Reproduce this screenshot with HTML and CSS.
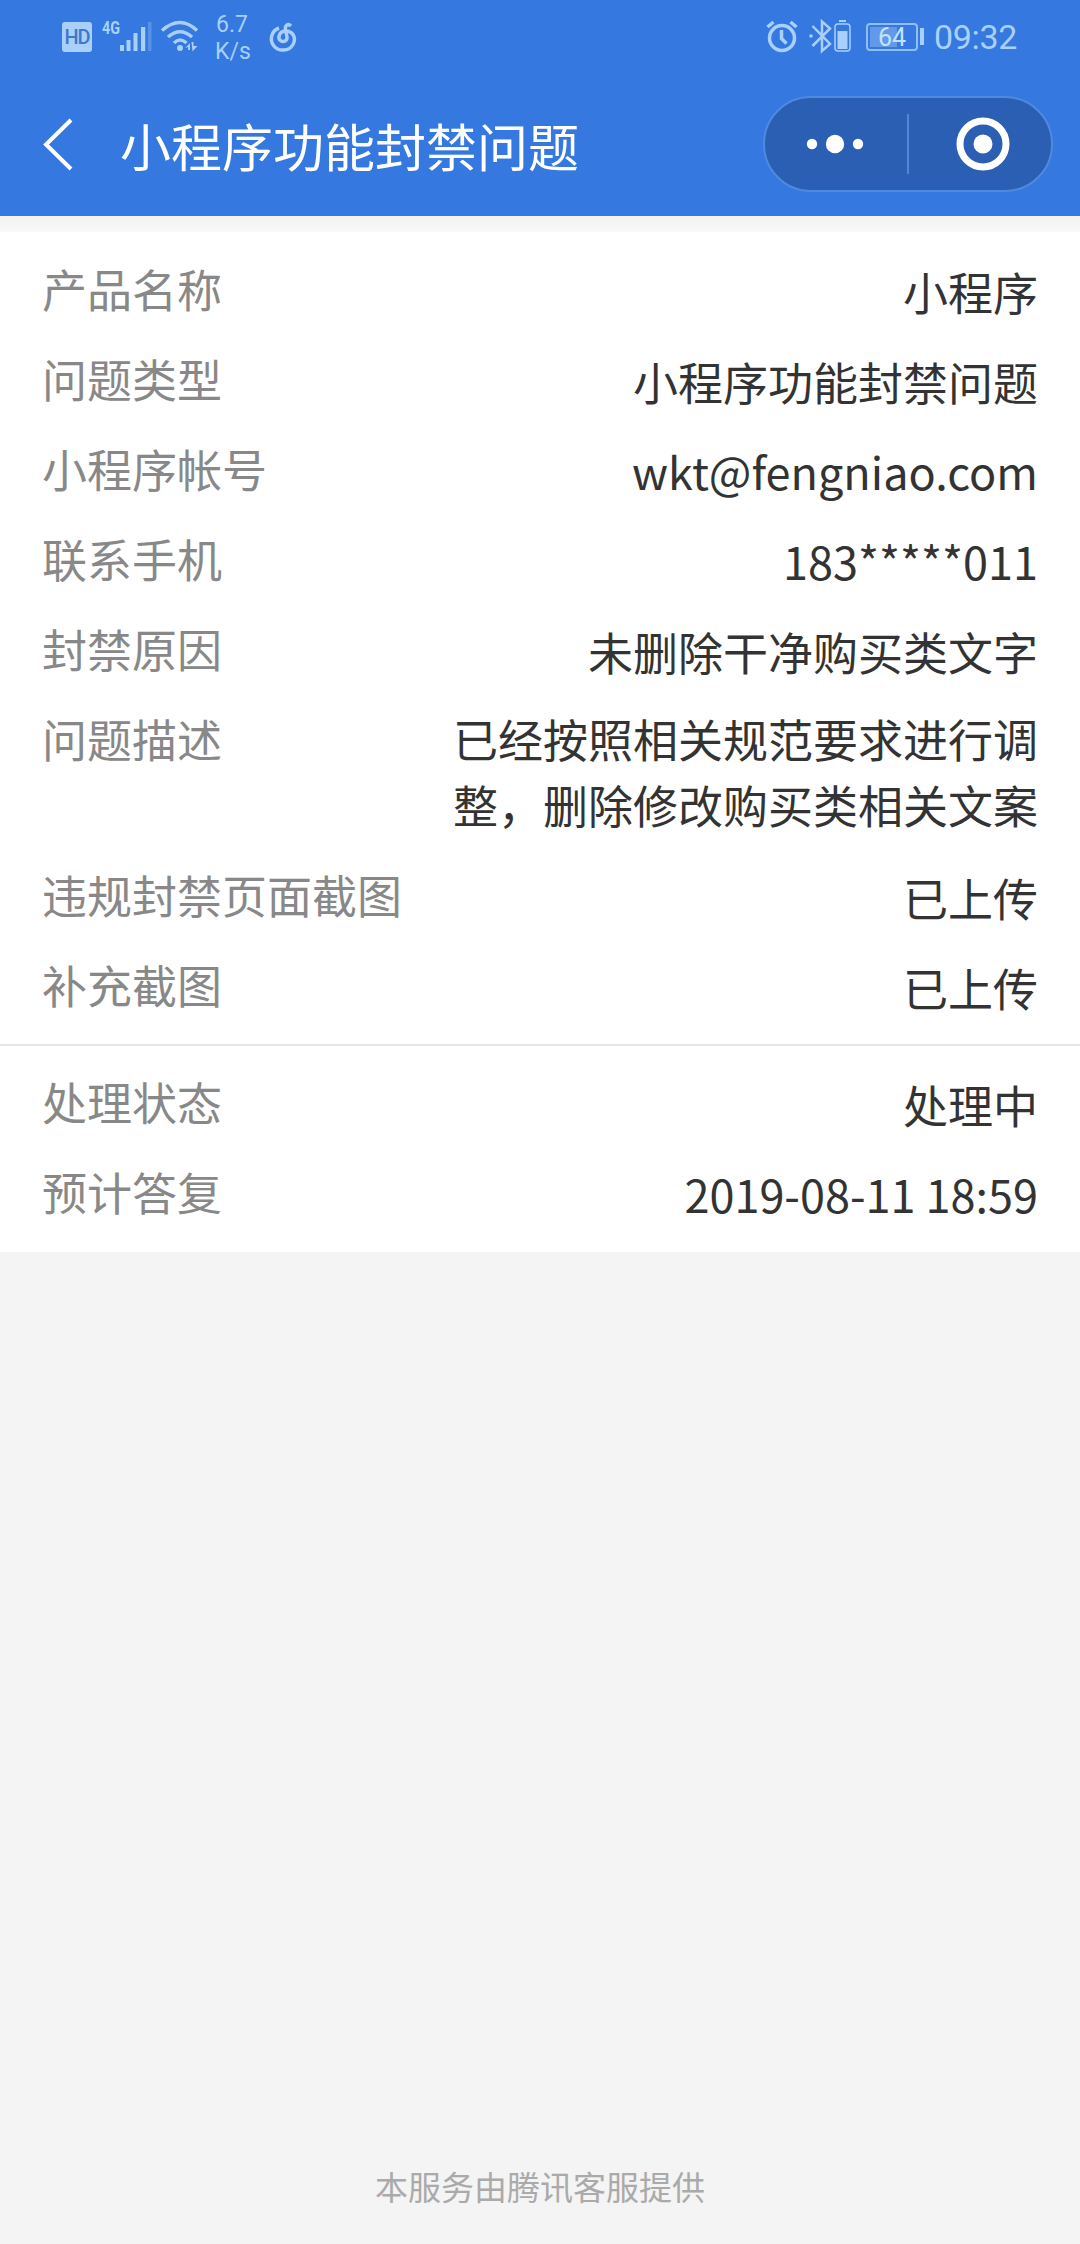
FILE: index.html
```
<!DOCTYPE html>
<html lang="zh-CN">
<head>
  <meta charset="UTF-8" />
  <meta name="viewport" content="width=device-width, initial-scale=1.0"/>
  <title>小程序功能封禁问题</title>
  <link rel="stylesheet" href="styles.css">
</head>
<body>
  <header class="header">
    <div class="status-bar">
      <div class="status-left">
        <span class="hd">HD</span>
        <!-- 信号 -->
        <svg class="icon" width="51" height="72" viewBox="101 0 51 72">
          <text class="net" x="102" y="34" textLength="18" lengthAdjust="spacingAndGlyphs">4G</text>
          <path d="M120 45h4v6h-4zM126.500 40h4v11h-4zM133.500 33h4v18h-4zM141 27h4.200v24H141z"/>
          <path opacity=".3" d="M148 22h3.500v29H148z"/>
        </svg>
        <!-- wifi -->
        <svg class="icon wifi" width="40" height="72" viewBox="160 0 40 72">
          <g class="line">
            <path d="M162 30.500Q180 14.500 197 30.500"/>
            <path d="M168 37Q180 26.500 192 37"/>
            <path d="M174 43Q180 37 186.500 43"/>
          </g>
          <circle cx="180" cy="48" r="3"/>
          <path d="M185 48l5-5v7h-2v-3zM191.500 42h2v4h4l-5 5.500z"/>
        </svg>
        <div class="speed">6.7<br>K/s</div>
        <!-- 音乐 -->
        <svg class="icon music" width="30" height="72" viewBox="268 0 30 72">
          <path class="line" d="M279 28C271 31 269.500 40 273.500 45.500C278.500 52 289 51.500 293 44.500C297 37 292 30.500 285 31C279 31.500 277.500 38 280.500 40.500C283.500 43 287.500 40.500 287 37L285.500 30C284.500 25.500 288 23 291 26"/>
        </svg>
      </div>
      <div class="status-right">
        <!-- 闹钟 -->
        <svg class="icon" width="34" height="72" viewBox="767 0 34 72">
          <g class="line">
            <circle cx="784" cy="38" r="12.500"/>
            <path d="M783.500 30v8.500l5 5"/>
            <path d="M769.500 27l6-5M798.500 27l-6-5"/>
          </g>
        </svg>
        <!-- 蓝牙 -->
        <svg class="icon bluetooth" width="44" height="72" viewBox="810 0 44 72">
          <path class="line thin" d="M813.500 26l17.500 18-8 7V21.500l8 7L813.500 46"/>
          <circle cx="812" cy="36" r="1.800"/>
          <rect class="line hair" x="836" y="24" width="15" height="27" rx="3"/>
          <path d="M840 20h7v2h-7zM838.500 31h10v18h-10z"/>
        </svg>
        <div class="battery"><span>64</span></div>
        <div class="battery-cap"></div>
        <span class="time">09:32</span>
      </div>
    </div>
    <div class="nav">
      <svg class="back" width="34" height="56" viewBox="0 0 34 56">
        <path d="M31 4L6 28.500L31 53"/>
      </svg>
      <h1>小程序功能封禁问题</h1>
      <div class="capsule">
        <svg width="50" height="20" viewBox="0 0 50 20">
          <circle cx="6" cy="10" r="5.200"/>
          <circle cx="29" cy="10" r="9.200"/>
          <circle cx="52" cy="10" r="5.200"/>
        </svg>
        <div class="capsule-line"></div>
        <svg width="54" height="54" viewBox="0 0 54 54">
          <circle class="ring" cx="27" cy="27" r="23"/>
          <circle cx="27" cy="27" r="9.500"/>
        </svg>
      </div>
    </div>
  </header>

  <main class="detail">
    <div class="section">
      <div class="row"><span class="label">产品名称</span><span class="value">小程序</span></div>
      <div class="row"><span class="label">问题类型</span><span class="value">小程序功能封禁问题</span></div>
      <div class="row"><span class="label">小程序帐号</span><span class="value latin">wkt@fengniao.com</span></div>
      <div class="row"><span class="label">联系手机</span><span class="value latin">183*****011</span></div>
      <div class="row"><span class="label">封禁原因</span><span class="value">未删除干净购买类文字</span></div>
      <div class="row row-long"><span class="label">问题描述</span><span class="value">已经按照相关规范要求进行调整，删除修改购买类相关文案</span></div>
      <div class="row"><span class="label">违规封禁页面截图</span><span class="value">已上传</span></div>
      <div class="row"><span class="label">补充截图</span><span class="value">已上传</span></div>
    </div>
    <div class="section section-status">
      <div class="row"><span class="label">处理状态</span><span class="value">处理中</span></div>
      <div class="row"><span class="label">预计答复</span><span class="value latin date">2019-08-11 18:59</span></div>
    </div>
  </main>

  <footer class="footer">本服务由腾讯客服提供</footer>
</body>
</html>
```
FILE: styles.css
```
* {
  box-sizing: border-box;
}
body {
  margin: 0;
  height: 2244px;
  display: flex;
  flex-direction: column;
  background-color: #f4f4f4;
  font-family: "Noto Sans CJK SC", sans-serif;
}
.header {
  height: 216px;
  background-color: #3478e0;
}

/* 状态栏 */
.status-bar {
  height: 72px;
  display: flex;
  justify-content: space-between;
  padding: 0 62px;
  color: #a9d0fa;
  font-family: Roboto, sans-serif;
}
.status-left,
.status-right {
  display: flex;
  align-items: center;
}
.icon {
  fill: #a9d0fa;
  overflow: visible;
}
.line {
  fill: none;
  stroke: #a9d0fa;
  stroke-width: 3.5;
}
.thin {
  stroke-width: 2.5;
}
.hair {
  stroke-width: 1.5;
}
.hd {
  width: 30px;
  height: 30px;
  margin: 2px 9px 0 0;
  border-radius: 3px;
  background-color: #a9d0fa;
  color: #3f78c8;
  font-size: 20px;
  font-weight: 500;
  line-height: 31px;
  text-align: center;
  letter-spacing: -1px;
}
.net {
  font-size: 18px;
  font-weight: bold;
}
.wifi {
  margin-left: 8px;
}
.speed {
  width: 34px;
  margin: 3px 0 0 15px;
  font-size: 23px;
  line-height: 27px;
  text-align: center;
}
.music {
  margin-left: 19px;
}
.bluetooth {
  margin-left: 10px;
}
.battery {
  width: 52px;
  height: 28px;
  margin: 1px 2px 0 13px;
  border: 2px solid #8fbdf5;
  border-radius: 4px;
  padding: 2px;
  color: #c4e2ff;
  font-size: 25px;
  line-height: 21px;
  text-align: center;
}
.battery span {
  display: block;
  height: 20px;
  background: linear-gradient(to right, #6299e8 62%, transparent 62%);
}
.battery-cap {
  width: 4px;
  height: 17px;
  margin-right: 10px;
  background-color: #a9d0fa;
}
.time {
  width: 84px;
  margin-top: 2px;
  font-size: 34px;
  line-height: 40px;
  letter-spacing: -0.3px;
}

/* 导航栏 */
.nav {
  height: 144px;
  display: flex;
  align-items: center;
  padding: 0 27px 0 40px;
}
.back {
  fill: none;
  stroke: #fff;
  stroke-width: 4;
}
.nav h1 {
  flex: 1;
  margin: 1px 0 0 46px;
  color: #fff;
  font-size: 51px;
  font-weight: normal;
  line-height: 72px;
}
.capsule {
  width: 290px;
  height: 96px;
  display: flex;
  align-items: center;
  padding-left: 41px;
  border: 2px solid #4f8ae0;
  border-radius: 48px;
  background-color: #2a5fb4;
}
.capsule svg {
  fill: #fff;
  overflow: visible;
}
.capsule-line {
  width: 2px;
  height: 60px;
  margin: 0 47px 0 51px;
  background-color: #4f88d8;
}
.ring {
  fill: none;
  stroke: #fff;
  stroke-width: 7;
}

/* 详情 */
.detail {
  background: linear-gradient(#f1f1f1, #f9f9f9 15px, #fff 17px);
}
.section {
  padding: 40px 42px 0;
  height: 828px;
}
.section-status {
  height: 208px;
  padding-top: 23px;
  border-top: 2px solid #e6e6e6;
}
.row {
  display: flex;
  justify-content: space-between;
  height: 90px;
  font-size: 45px;
  line-height: 66px;
}
.label {
  color: #888;
}
.value {
  color: #333;
  line-height: 72px;
}
.latin {
  line-height: 70px;
}
.date {
  font-kerning: none;
}
.row-long {
  height: 156px;
}
.row-long .value {
  width: 585px;
  line-height: 66px;
}

.footer {
  margin-top: auto;
  padding-bottom: 34px;
  color: #aaa;
  font-size: 33px;
  line-height: 48px;
  text-align: center;
}
```
